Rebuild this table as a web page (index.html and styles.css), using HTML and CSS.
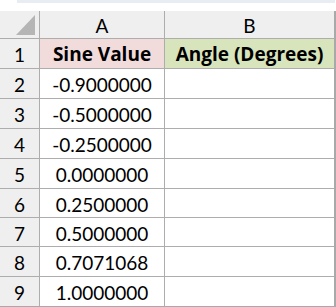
FILE: index.html
```html
<!DOCTYPE html>
<html>
<head>
<meta charset="utf-8">
<link rel="stylesheet" href="styles.css">
</head>
<body>
<div class="topbar"><div class="topbar-fill"></div></div>
<div class="sheet">
  <div class="corner"><div class="tri"></div></div>
  <div class="colhead">A</div>
  <div class="colhead">B</div>

  <div class="rowhead r1">1</div>
  <div class="cell num head pink">Sine Value</div>
  <div class="cell head green">Angle (Degrees)</div>

  <div class="rowhead">2</div><div class="cell num">-0.9000000</div><div class="cell"></div>
  <div class="rowhead">3</div><div class="cell num">-0.5000000</div><div class="cell"></div>
  <div class="rowhead">4</div><div class="cell num">-0.2500000</div><div class="cell"></div>
  <div class="rowhead">5</div><div class="cell num">0.0000000</div><div class="cell"></div>
  <div class="rowhead">6</div><div class="cell num">0.2500000</div><div class="cell"></div>
  <div class="rowhead">7</div><div class="cell num">0.5000000</div><div class="cell"></div>
  <div class="rowhead">8</div><div class="cell num">0.7071068</div><div class="cell"></div>
  <div class="rowhead">9</div><div class="cell num">1.0000000</div><div class="cell"></div>
</div>
</body>
</html>
```

FILE: styles.css
```css
html, body {
  margin: 0;
  padding: 0;
  background: #ffffff;
}
body {
  width: 336px;
  height: 307px;
  overflow: hidden;
  font-family: Lato, "Open Sans", sans-serif;
  color: #000;
}
.topbar {
  height: 3px;
  padding-left: 17px;
  margin-bottom: 8px;
  display: flex;
}
.topbar-fill {
  flex: 1;
  margin-right: 1px;
  background: #e8edf3;
}
.sheet {
  display: grid;
  grid-template-columns: 39px 124px 169px;
  grid-template-rows: 27px 29px 29px 29px 29px 29px 28px 28px 29px 29px;
  gap: 1px;
  width: 334px;
  border-right: 2px solid #a9a9a9;
  border-bottom: 1px solid #a9a9a9;
  background: #adadad;
}
.corner {
  background: #efefef;
  display: flex;
  justify-content: flex-end;
  align-items: flex-end;
  padding: 0 4px 3px 0;
}
.tri {
  width: 19px;
  height: 20px;
  background: #b5b5b5;
  clip-path: polygon(100% 0, 100% 100%, 0 100%);
}
.colhead {
  background: #efefef;
  display: flex;
  align-items: center;
  justify-content: center;
  font-size: 19px;
  padding-top: 2px;
}
.rowhead {
  background: #efefef;
  display: flex;
  align-items: center;
  justify-content: center;
  font-size: 19px;
  padding-top: 2px;
}
.cell {
  background: #ffffff;
  display: flex;
  align-items: center;
  justify-content: center;
  font-size: 19px;
  padding-top: 2px;
  white-space: nowrap;
}
.head {
  font-family: "Open Sans", Lato, sans-serif;
  font-weight: 700;
  font-size: 19px;
  padding-top: 1px;
}
.pink {
  background: #f2dcdb;
}
.green {
  background: #d8e4bc;
}
```
